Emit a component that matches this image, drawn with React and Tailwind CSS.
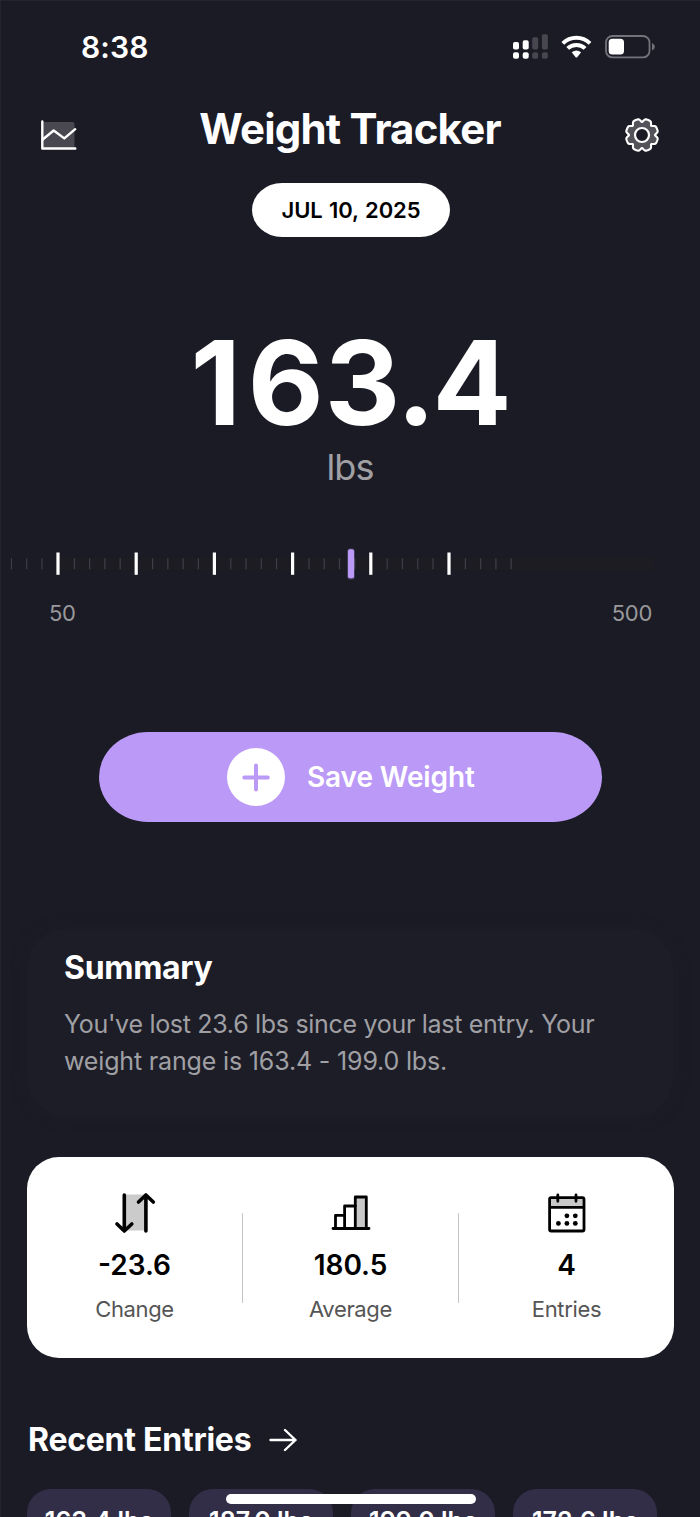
import React from "react";

const gearPath = (() => {
  const pts = [];
  const n = 192;
  for (let i = 0; i < n; i++) {
    const a = (i / n) * Math.PI * 2;
    const s = Math.abs(Math.sin(a * 4));
    const t = Math.min(1, s * 1.12);
    const lobe = t * t * (3 - 2 * t);
    const r = 13 + 3.2 * lobe;
    pts.push(`${(18 + r * Math.sin(a)).toFixed(2)} ${(18 - r * Math.cos(a)).toFixed(2)}`);
  }
  return `M${pts.join("L")}Z`;
})();

const ticks = (() => {
  const out = [];
  for (let k = -1; k < 6; k++) {
    const c = 58 + k * 78.2;
    if (k >= 0) out.push({ x: c, major: true });
    for (let j = 0; j < 4; j++) {
      const x = c + 16.4 + j * 15.25;
      if (x > 5 && x < 515) out.push({ x, major: false });
    }
  }
  return out;
})();

function StatusBar() {
  return (
    <div className="flex h-[94px] shrink-0 items-center justify-between pl-[81px] pr-[45px]">
      <span className="text-[30px] leading-none font-semibold tracking-[0.1px]">8:38</span>
      <svg width="142" height="26" viewBox="0 0 142 26" fill="#fff">
        <rect x="0" y="8" width="6" height="7.5" rx="1.8" />
        <rect x="9.7" y="6.3" width="6" height="9.2" rx="1.8" />
        <g fill="#484750">
          <rect x="19.2" y="3.3" width="6" height="12.2" rx="1.8" />
          <rect x="28.9" y="0.3" width="6" height="15.2" rx="1.8" />
          <rect x="19.2" y="18.3" width="6" height="6.5" rx="2" />
          <rect x="28.9" y="18.3" width="6" height="6.5" rx="2" />
        </g>
        <rect x="0" y="18.3" width="6" height="6.5" rx="2" />
        <rect x="9.7" y="18.3" width="6" height="6.5" rx="2" />
        <g fill="none" stroke="#fff" strokeWidth="4">
          <path d="M49.8 9.4 A19.5 19.5 0 0 1 77 9.4" />
          <path d="M54.7 14.4 A12.5 12.5 0 0 1 72.1 14.4" />
        </g>
        <path d="M58.7 18.3 Q63.4 14.8 68.1 18.3 L64.4 22.9 Q63.4 23.9 62.4 22.9 Z" />
        <rect x="93" y="2" width="43.5" height="21.4" rx="6.5" fill="none" stroke="#74737b" strokeWidth="1.8" />
        <rect x="95.7" y="4.8" width="15.3" height="15.8" rx="3.6" />
        <path d="M139 9 Q141.8 10 141.8 12.7 Q141.8 15.4 139 16.4 Z" fill="#74737b" />
      </svg>
    </div>
  );
}

function Header() {
  return (
    <div className="flex h-[89px] shrink-0 items-start justify-between pl-[40px] pr-[40px]">
      <svg className="mt-[23px]" width="38" height="36" viewBox="0 0 38 36">
        <path d="M2 5h30.5q2 0 2 2v24H2z" fill="#494850" />
        <path d="M2.3 4.5v27h33" fill="none" stroke="#fff" strokeWidth="2.4" strokeLinecap="round" strokeLinejoin="round" />
        <path d="M3 22.3l10.7-8.8 10.6 7.9 10.9-9.2" fill="none" stroke="#fff" strokeWidth="2.4" strokeLinecap="round" strokeLinejoin="round" />
      </svg>
      <h1 className="mt-[10px] mr-[2px] text-[42px] leading-[50px] font-bold tracking-[-0.8px] whitespace-nowrap">Weight Tracker</h1>
      <svg className="mt-[23px]" width="36" height="36" viewBox="0 0 36 36">
        <path d={gearPath} fill="#54535a" stroke="#fff" strokeWidth="2.1" strokeLinejoin="round" />
        <circle cx="18" cy="18" r="7" fill="#1b1b26" stroke="#fff" strokeWidth="2.2" />
      </svg>
    </div>
  );
}

function Ruler() {
  return (
    <svg className="block" width="700" height="50" viewBox="0 539 700 50">
      <rect x="58" y="558" width="596" height="12" fill="#1c1c22" />
      {ticks.map((t) =>
        t.major ? (
          <rect key={t.x} x={t.x - 1.6} y="552.5" width="3.2" height="22.3" fill="#fff" />
        ) : (
          <rect key={t.x} x={t.x - 0.6} y="558.3" width="1.2" height="11" fill="#3f3e48" />
        )
      )}
      <rect x="347.2" y="548.5" width="7.6" height="31" rx="3" fill="#bb9af7" opacity="0.3" />
      <rect x="348" y="549.3" width="6" height="29" rx="2" fill="#bb9af7" />
    </svg>
  );
}

function ChangeIcon() {
  return (
    <svg width="42" height="42" viewBox="0 0 42 42" fill="none" stroke="#000" strokeWidth="3.6" strokeLinecap="round" strokeLinejoin="round">
      <path d="M10.5 2.5H32v36H10.5z" fill="#cbcbcb" stroke="none" />
      <path d="M10.3 3v36M3 32l7.3 7 7.5-7M31.9 39V3M24.5 10l7.4-7 7.4 7" />
    </svg>
  );
}

function AverageIcon() {
  return (
    <svg width="42" height="42" viewBox="0 0 42 42" fill="none" stroke="#000" strokeWidth="2.8" strokeLinecap="round" strokeLinejoin="round">
      <path d="M25.3 5h11v31.5h-11z" fill="#c8c8c8" />
      <path d="M14.6 36.5V14h10.7M5.5 36.5V23.3h9.1M3 36.5h36" />
    </svg>
  );
}

function EntriesIcon() {
  return (
    <svg width="42" height="42" viewBox="0 0 42 42">
      <path d="M4 5.6h34v9.6H4z" fill="#c8c8c8" />
      <path d="M5.2 5.6h31.2q1.6 0 1.6 1.6v30.2q0 1.6-1.6 1.6H5.2q-1.6 0-1.6-1.6V7.2q0-1.6 1.6-1.6zM3.6 15.3H38M11.8 3v6.3M30 3v6.3" fill="none" stroke="#000" strokeWidth="2.8" strokeLinecap="round" />
      <g fill="#000">
        <circle cx="20.9" cy="23.8" r="2.4" />
        <circle cx="29.3" cy="23.8" r="2.4" />
        <circle cx="12.4" cy="31.4" r="2.4" />
        <circle cx="20.9" cy="31.4" r="2.4" />
        <circle cx="29.3" cy="31.4" r="2.4" />
      </g>
    </svg>
  );
}

function Stat({ icon, value, label }) {
  return (
    <div className="flex flex-1 flex-col items-center pt-[35px]">
      {icon}
      <span className="mt-[13px] text-[28px] leading-[36px] font-semibold text-black">{value}</span>
      <span className="mt-[12px] text-[22px] leading-[28px] tracking-[-0.35px] text-[#555]">{label}</span>
    </div>
  );
}

const entries = ["163.4 lbs", "187.0 lbs", "199.0 lbs", "172.6 lbs"];

export default function App() {
  return (
    <div className="relative flex h-[1517px] w-[700px] flex-col overflow-hidden bg-[#1b1b26] font-['Inter',sans-serif] text-white shadow-[inset_1px_1px_0_#24232e]">
      <StatusBar />
      <Header />
      <div className="ml-[252px] flex h-[54px] w-[198px] shrink-0 items-center justify-center rounded-[30px/27px] bg-white">
        <span className="text-[22px] leading-none font-semibold tracking-[-0.1px] text-black [word-spacing:1px]">JUL 10, 2025</span>
      </div>
      <div className="mt-[83px] flex shrink-0 flex-col items-center">
        <span className="h-[124px] pl-[2px] text-[117px] leading-[126px] font-bold whitespace-nowrap">
          <span className="tracking-[7px]">1</span>
          <span className="tracking-[1px]">6</span>
          <span className="tracking-[-4px]">3</span>
          <span className="tracking-[-3px]">.</span>4
        </span>
        <span className="text-[36px] leading-[46px] tracking-[-0.9px] text-[#a0a0a4]">lbs</span>
      </div>
      <div className="mt-[49px] shrink-0">
        <Ruler />
      </div>
      <div className="mt-[10px] flex shrink-0 justify-between pr-[48px] pl-[49px] text-[22px] leading-[28px] tracking-[-0.3px] text-[#99999b]">
        <span>50</span>
        <span>500</span>
      </div>
      <button className="mt-[105px] ml-[99px] flex h-[90px] w-[503px] shrink-0 items-center rounded-[49px/45px] bg-[#bb9af7] pl-[128px]">
        <span className="flex size-[58px] items-center justify-center rounded-full bg-white">
          <svg width="30" height="30" viewBox="0 0 30 30" stroke="#bb9af7" strokeWidth="4" strokeLinecap="round">
            <path d="M15 3.5v24M3.3 15.5h23.5" />
          </svg>
        </span>
        <span className="ml-[22px] text-[28px] leading-none font-semibold tracking-[-0.1px] whitespace-nowrap">Save Weight</span>
      </button>
      <section className="mx-[27px] mt-[107px] h-[188px] shrink-0 rounded-[40px] bg-[#1d1d28] px-[37px] pt-[18px] shadow-[0_0_10px_6px_#1c1c27]">
        <h2 className="text-[32px] leading-[42px] font-bold tracking-[-0.3px] whitespace-nowrap">Summary</h2>
        <p className="mt-[16.5px] text-[25px] leading-[37.5px] whitespace-nowrap text-[#a0a0a4]">
          <span className="tracking-[-0.3px]">You've lost 23.6 lbs since your last entry. Your</span>
          <br />
          <span className="tracking-[-0.16px]">weight range is 163.4 - 199.0 lbs.</span>
        </p>
      </section>
      <section className="mt-[40px] ml-[27px] flex h-[200.5px] w-[647px] shrink-0 rounded-[32px] bg-white">
        <Stat icon={<ChangeIcon />} value="-23.6" label="Change" />
        <div className="mt-[56px] h-[90px] w-px bg-[#c4c4c4]" />
        <Stat icon={<AverageIcon />} value="180.5" label="Average" />
        <div className="mt-[56px] h-[90px] w-px bg-[#c4c4c4]" />
        <Stat icon={<EntriesIcon />} value="4" label="Entries" />
      </section>
      <div className="mt-[62.5px] ml-[28px] flex h-[40px] shrink-0 items-center gap-[18px]">
        <h2 className="text-[32px] leading-[40px] font-bold tracking-[-0.25px] whitespace-nowrap">Recent Entries</h2>
        <svg width="28" height="24" viewBox="0 0 28 24" fill="none" stroke="#fff" strokeWidth="2.4" strokeLinecap="round" strokeLinejoin="round">
          <path d="M1.5 12h25M16 2l10.5 10L16 22" />
        </svg>
      </div>
      <div className="mt-[29px] ml-[27px] flex shrink-0 gap-[18px]">
        {entries.map((e) => (
          <div key={e} className="flex h-[120px] w-[144px] shrink-0 justify-center rounded-[24px] bg-[#332e47] pt-[16px]">
            <span className="text-[25px] leading-[32px] font-semibold whitespace-nowrap">{e}</span>
          </div>
        ))}
      </div>
      <div className="absolute top-[1494px] left-[226px] h-[10px] w-[250px] rounded-full bg-white" />
    </div>
  );
}
